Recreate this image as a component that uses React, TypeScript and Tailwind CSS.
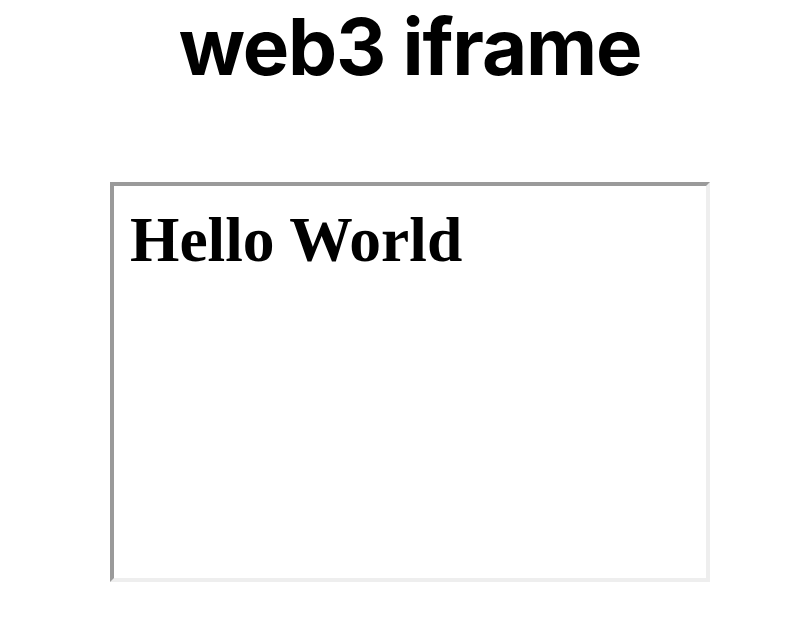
export default function App() {
  return (
    <main className="min-h-screen bg-white flex flex-col items-center pl-[32px]">
      <h1
        className="pt-[8px] text-[78px] font-bold leading-none tracking-[-0.015em] text-black"
        style={{ fontFamily: 'Inter, "Liberation Sans", sans-serif' }}
      >
        web3 iframe
      </h1>

      {/* iframe-like frame */}
      <div className="mt-[96px] w-[600px] h-[400px] bg-white border-4 border-t-[#9a9a9a] border-l-[#9a9a9a] border-b-[#eeeeee] border-r-[#eeeeee]">
        <div className="pt-[22px] pl-[16px]">
          <h2
            className="text-[63.5px] font-bold leading-none text-black"
            style={{ fontFamily: '"Liberation Serif", serif' }}
          >
            Hello World
          </h2>
        </div>
      </div>
    </main>
  )
}
